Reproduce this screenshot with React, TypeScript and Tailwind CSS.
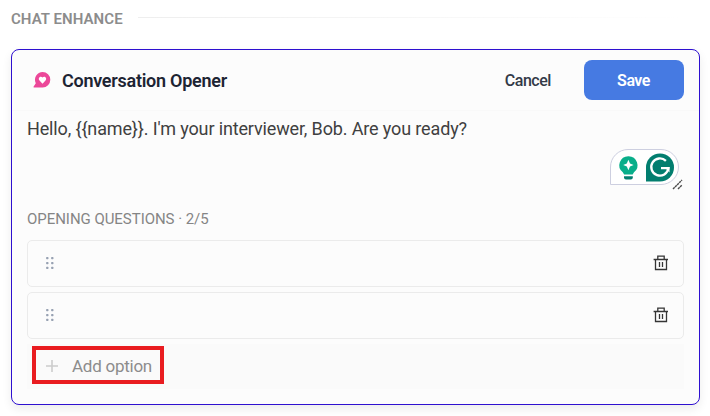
function OpenerIcon() {
  return (
    <svg className="h-[17px] w-[18px] shrink-0" viewBox="0 0 18 17">
      <path d="M9.6.1a7.7 7.7 0 0 1 0 15.4H1c-.6 0-.7-.4-.5-.8l2.3-3.4A7.7 7.7 0 0 1 9.6.1Z" fill="#ec4899" />
      <path d="m9.5 11.7-3-3.1C4.4 6.3 7.6 3.4 9.5 5.6c1.9-2.2 5.1.7 3 3Z" fill="#fff" />
    </svg>
  );
}

function AssistantBadge() {
  return (
    <div className="absolute right-[20px] top-[38px] flex h-9 w-[69px] rounded-t-[18px] rounded-br-[18px] border border-[#cdcfe0] bg-white">
      <svg className="h-full w-full" viewBox="0 0 67 34">
        <path d="M17.4 6.2a9 9 0 0 0-5.6 16.1l1.3 2.2h8.6l1.3-2.2A9 9 0 0 0 17.4 6.2Z" fill="#08ae8a" />
        <path d="M13 26.2h8.8v1.2q0 2-2 2H15q-2 0-2-2Z" fill="#027e6f" />
        <path d="m17.4 9.8 1.6 3.6 3.6 1.6-3.6 1.6-1.6 3.6-1.6-3.6-3.6-1.6 3.6-1.6Z" fill="#fff" />
        <path d="M49 3.5a14 14 0 1 1 0 28H35V17.5a14 14 0 0 1 14-14Z" fill="#027e6f" />
        <path d="M54.9 10.9a8.6 8.6 0 1 0 2.5 7.3H50" fill="none" stroke="#fff" strokeWidth="2.3" />
        <path d="M53.6 17.1h4.9v5.3Z" fill="#fff" />
      </svg>
    </div>
  );
}

function DragDots() {
  return (
    <svg className="h-3 w-2" viewBox="0 0 8 12" fill="#98a2b3">
      {[1.3, 6.3].map((x) => [1.3, 6.3, 11].map((y) => (
        <rect key={`${x}-${y}`} x={x - 1.2} y={y - 1.2} width="2.4" height="2.2" rx=".7" />
      )))}
    </svg>
  );
}

function TrashIcon() {
  return (
    <svg className="h-4 w-4" viewBox="0 0 16 16" fill="none" stroke="#353535" strokeWidth="1.3">
      <path d="M.6 4.5H15M2.5 4.5v10h11v-10M4.8 4V1.2h6.4V4M6.5 7v5M9.5 7v5" />
    </svg>
  );
}

function QuestionRow() {
  return (
    <div className="flex h-[47px] items-center justify-between rounded-[5px] border border-[#ebebeb] pb-[1px] pl-[18px] pr-[14px]">
      <DragDots />
      <TrashIcon />
    </div>
  );
}

export default function App() {
  return (
    <main className="h-[416px] w-[710px] overflow-hidden bg-white pl-[11px] pr-[10px] font-['Roboto',sans-serif]">
      <div className="flex h-[49px] items-start gap-[15px] pt-[9px]">
        <h2 className="w-[112px] whitespace-nowrap text-[15px] font-semibold leading-5 tracking-[0.06px] text-[#8c8c8c]">CHAT ENHANCE</h2>
        <div className="mt-2 h-px w-[550px] bg-linear-to-r from-[#eeeeee] to-white" />
      </div>
      <section className="h-[356px] rounded-lg border border-[#2e10d0] bg-[#fcfcfc] shadow-[0_4px_10px_rgba(0,0,0,0.08)]">
        <header className="flex h-[61px] items-center border-b border-[#f9f9f9] pl-[21px] pr-[15px]">
          <OpenerIcon />
          <h1 className="ml-[11px] grow pt-[2px] text-[18px] font-semibold leading-6 tracking-[-0.26px] text-[#1d2433]">Conversation Opener</h1>
          <button className="mr-[33px] pt-[2px] text-[16px] font-medium tracking-[-0.45px] text-[#333a48]">Cancel</button>
          <button className="h-10 w-[100px] rounded-lg bg-[#467ae2] pr-px pt-[2px] text-[16px] font-semibold tracking-[-0.5px] text-white">Save</button>
        </header>
        <div className="relative h-[95px] px-[15px] pt-[6px]">
          <p className="whitespace-nowrap text-[18px] leading-6 tracking-[-0.14px] text-[#404040]">Hello, {"{{name}}"}. I'm your interviewer, Bob. Are you ready?</p>
          <AssistantBadge />
          <svg className="absolute right-[16px] top-[68px] h-[11px] w-[11px]" viewBox="0 0 11 11" stroke="#4b4b4b" strokeWidth="1.4" strokeDasharray="2.4 .5">
            <path d="M1 10 10 1M6 10l4-4" />
          </svg>
        </div>
        <div className="px-[15px]">
          <h3 className="h-[34px] pt-[3px] text-[15px] leading-5 tracking-[-0.04px] text-[#858585]">OPENING QUESTIONS · 2/5</h3>
          <div className="flex flex-col gap-[5px]">
            <QuestionRow />
            <QuestionRow />
            <div className="flex h-[45px] bg-[#fafafa] pl-[5px] pt-[2px]">
              <button className="flex h-[38px] w-[132px] items-center gap-[14px] border-4 border-[#e91c20] pl-[10px] pt-[2px] text-[#8c8c8c]">
                <svg className="h-3 w-3 shrink-0" viewBox="0 0 12 12" stroke="#cccccc" strokeWidth="1.6">
                  <path d="M6 0v12M0 6h12" />
                </svg>
                <span className="whitespace-nowrap text-[17px] leading-6 tracking-[-0.25px]">Add option</span>
              </button>
            </div>
          </div>
        </div>
      </section>
    </main>
  );
}
